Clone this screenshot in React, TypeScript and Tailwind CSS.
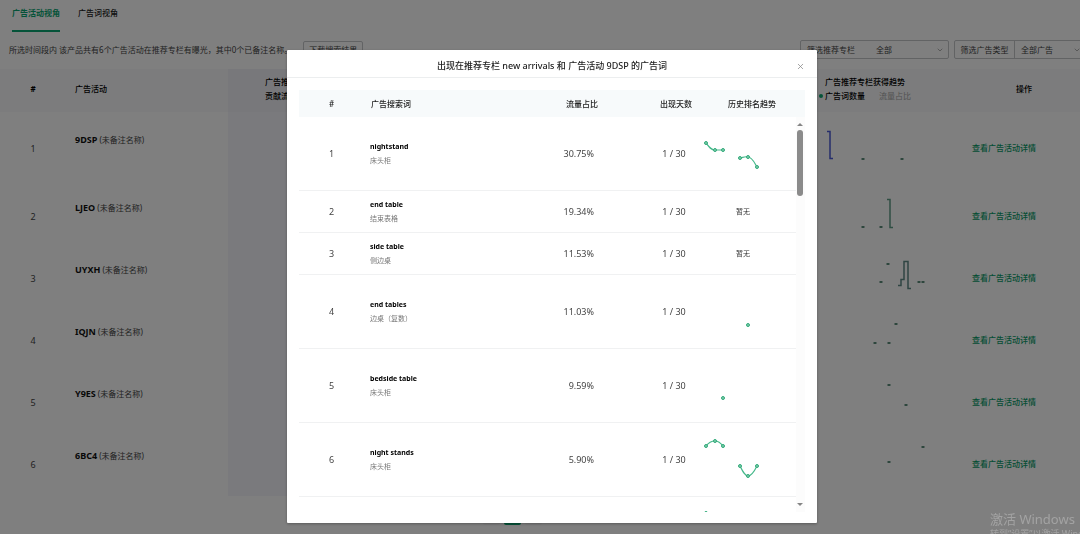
import React from "react";
import { ChevronDown, ChevronLeft, ChevronRight, X } from "lucide-react";

type Point = [number, number];

interface Campaign {
  code: string;
  line?: string;
  lineClass?: string;
  dots: Point[];
}

interface Keyword {
  word?: string;
  translation?: string;
  share?: string;
  days?: string;
  lines?: string[];
  points?: Point[];
}

const campaigns: Campaign[] = [
  { code: "9DSP", line: "M10 19.5h3v27h3", lineClass: "stroke-[#4a5ad8]", dots: [[46, 47], [85, 47]] },
  { code: "LJEO", line: "M70 13.5h3v28h3", lineClass: "stroke-[#5f9c86]", dots: [[46, 41], [64, 41]] },
  { code: "UYXH", line: "M81 37.5h3v-6h3v-18h4v27h3", lineClass: "stroke-[#5f8a86]", dots: [[71, 16], [64, 34], [102, 34], [106, 34]] },
  { code: "IQJN", dots: [[79, 14], [58, 33], [72, 33]] },
  { code: "Y9ES", dots: [[72, 13], [89, 33]] },
  { code: "6BC4", dots: [[106, 13], [72, 28]] },
];

const keywords: Keyword[] = [
  {
    word: "nightstand",
    translation: "床头柜",
    share: "30.75%",
    days: "1 / 30",
    lines: ["M2 25C5 29 7 32 11 32H19", "M36 40C39 39.5 41 38 44 39C48 39 50 44 53 49"],
    points: [[2, 25], [11, 32], [19, 32], [36, 40], [44, 39], [53, 49]],
  },
  { word: "end table", translation: "结束表格", share: "19.34%", days: "1 / 30" },
  { word: "side table", translation: "侧边桌", share: "11.53%", days: "1 / 30" },
  { word: "end tables", translation: "边桌（复数）", share: "11.03%", days: "1 / 30", points: [[44, 49]] },
  { word: "bedside table", translation: "床头柜", share: "9.59%", days: "1 / 30", points: [[19, 48]] },
  {
    word: "night stands",
    translation: "床头柜",
    share: "5.90%",
    days: "1 / 30",
    lines: ["M2 22C5 18 8 17 11 17C14 17 16 18 19 22", "M36 42C39 48 41 52 44 52C47 52 50 48 53 42"],
    points: [[2, 22], [11, 17], [19, 22], [36, 42], [44, 52], [53, 42]],
  },
  { points: [[2, 15]] },
];

function Tabs() {
  return (
    <nav className="flex h-8 gap-[18px] px-3 text-[8px]">
      <button className="border-b-2 border-[#0aa672] pb-1 font-bold text-[#0aa672]">广告活动视角</button>
      <button className="border-b-2 border-transparent pb-1 font-medium text-[#222]">广告词视角</button>
    </nav>
  );
}

function Filter({ id, label, value, divided }: { id: string; label: string; value: string; divided?: boolean }) {
  return (
    <div className="flex h-[19px] items-center rounded-[2px] border border-[#c4c6c9]">
      <label
        htmlFor={id}
        className={"flex h-full w-[60px] items-center justify-center " + (divided ? "border-r border-[#c4c6c9]" : "")}
      >
        {label}
      </label>
      <div className={"relative flex items-center " + (divided ? "w-[70px]" : "w-[87px]")}>
        <select
          id={id}
          className={"w-full appearance-none bg-transparent text-[8px] text-[#444] " + (divided ? "pl-1.5" : "pl-[15px]")}
        >
          <option>{value}</option>
        </select>
        <ChevronDown className="pointer-events-none absolute right-1 size-2 text-[#888]" strokeWidth={2} />
      </div>
    </div>
  );
}

function Toolbar() {
  return (
    <div className="mb-2.5 flex h-[27px] items-end justify-between text-[8px] text-[#444]">
      <div className="flex items-center gap-[11px] pl-[9px]">
        <p className="whitespace-nowrap">所选时间段内 该产品共有6个广告活动在推荐专栏有曝光，其中0个已备注名称。</p>
        <button className="h-[18px] rounded-[2px] border border-[#c4c6c9] px-[5px]">下载搜索结果</button>
      </div>
      <div className="-mr-1.5 flex gap-[5px]">
        <Filter id="column-filter" label="筛选推荐专栏" value="全部" />
        <Filter id="type-filter" label="筛选广告类型" value="全部广告" divided />
      </div>
    </div>
  );
}

function CampaignTable() {
  return (
    <table className="w-full table-fixed border-separate border-spacing-0 text-left text-[8px]">
      <colgroup>
        <col className="w-[66px]" />
        <col className="w-[162px]" />
        <col className="w-[132px]" />
        <col />
        <col className="w-[151px]" />
        <col className="w-[112px]" />
      </colgroup>
      <thead className="bg-[#f8f9fa] leading-[14px] text-black">
        <tr className="h-[43px] *:pb-[3px]">
          <th className="text-center">#</th>
          <th className="pl-[9px] font-medium">广告活动</th>
          <th className="bg-[#f1f1f6] pl-[37px] font-medium">
            广告推荐专栏
            <br />
            贡献流量占比
          </th>
          <th />
          <th className="pl-0.5 font-medium">
            <div className="pl-1.5">广告推荐专栏获得趋势</div>
            <div className="flex items-center gap-0.5">
              <span className="size-1 rounded-full bg-[#0aa672]" />
              广告词数量
              <span className="pl-3 font-normal text-[#a5a5a5]">流量占比</span>
            </div>
          </th>
          <th className="text-center font-medium">操作</th>
        </tr>
      </thead>
      <tbody>
        {campaigns.map((c, i) => (
          <tr key={c.code} className={i === 0 ? "h-[74px]" : "h-[62px]"}>
            <td className="text-center text-[9px] text-[#444]">{i + 1}</td>
            <td className="pb-[18px] pl-[9px] text-[#444]">
              <span className="text-[9px] font-bold text-[#111]">{c.code}</span> (未备注名称)
            </td>
            <td className="bg-[#f5f5fa]" />
            <td />
            <td className="align-top">
              <svg className="block h-[60px] w-[150px]" viewBox="0 0 150 60" aria-hidden="true">
                {c.line && <path d={c.line} fill="none" className={c.lineClass} strokeWidth="1.5" />}
                {c.dots.map(([x, y]) => (
                  <ellipse key={`${x}-${y}`} cx={x} cy={y} rx="1.8" ry="1" className="fill-[#4f8370]" />
                ))}
              </svg>
            </td>
            <td className="pb-0.5 pl-1">
              <a href="#details" className="font-medium text-[#0a9c69]">查看广告活动详情</a>
            </td>
          </tr>
        ))}
      </tbody>
    </table>
  );
}

function Pagination() {
  return (
    <div className="flex justify-center gap-1 pt-3 pr-14">
      <button aria-label="上一页" className="flex size-[17px] items-center justify-center rounded-[2px] bg-[#f7f7f8]">
        <ChevronLeft className="size-2" />
      </button>
      <button aria-label="当前页" className="size-[17px] rounded-[2px] bg-[#0aa672]" />
      <button aria-label="下一页" className="flex size-[17px] items-center justify-center rounded-[2px] bg-[#f7f7f8]">
        <ChevronRight className="size-2" />
      </button>
    </div>
  );
}

function RankTrend({ lines = [], points = [] }: { lines?: string[]; points?: Point[] }) {
  return (
    <svg className="block h-[72px] w-[92px]" viewBox="0 0 92 72" aria-hidden="true">
      {lines.map((d) => (
        <path key={d} d={d} fill="none" stroke="#45b88a" strokeWidth="1.2" />
      ))}
      {points.map(([x, y]) => (
        <circle key={`${x}-${y}`} cx={x} cy={y} r="1.5" fill="#7fcbac" stroke="#31ab7a" strokeWidth="1" />
      ))}
    </svg>
  );
}

function KeywordTable() {
  return (
    <table className="w-full table-fixed border-separate border-spacing-0 text-left">
      <colgroup>
        <col className="w-[65px]" />
        <col />
        <col className="w-[91px]" />
        <col className="w-[60px]" />
        <col className="w-[92px]" />
      </colgroup>
      <thead className="bg-[#f7fafb] text-[8px] text-[#222]">
        <tr className="h-[27px]">
          <th className="text-center font-medium">#</th>
          <th className="pl-[7px] font-medium">广告搜索词</th>
          <th className="pl-[13px] font-medium">流量占比</th>
          <th className="pl-1 text-center font-medium">出现天数</th>
          <th className="pl-1 text-center font-medium">历史排名趋势</th>
        </tr>
      </thead>
      <tbody className="text-[9px] text-[#444]">
        {keywords.map((k, i) => (
          <tr key={i} className={k.points ? "h-[74px] *:border-b *:border-[#f0f1f2]" : "h-[42px] *:border-b *:border-[#f0f1f2]"}>
            <td className="text-center">{k.word && i + 1}</td>
            <td className="pl-1.5">
              <div className="text-[7px] leading-[14px] font-bold text-black">{k.word}</div>
              <div className="text-[7px] leading-[13px] text-[#777]">{k.translation}</div>
            </td>
            <td className="pr-[50px] text-right">{k.share}</td>
            <td className="text-center">{k.days}</td>
            <td>
              {k.points ? (
                <RankTrend lines={k.lines} points={k.points} />
              ) : (
                <span className="pl-8 text-[7px] text-[#333]">暂无</span>
              )}
            </td>
          </tr>
        ))}
      </tbody>
    </table>
  );
}

function ScrollRail() {
  return (
    <div className="flex w-[9px] shrink-0 flex-col" aria-hidden="true">
      <div className="h-[27px] bg-[#f7fafb]" />
      <div className="flex flex-1 flex-col items-center bg-[#fcfcfc] py-1.5 pr-px">
        <svg className="h-[3px] w-1.5" viewBox="0 0 6 3">
          <path d="M0 3L3 0L6 3Z" fill="#858585" />
        </svg>
        <div className="mt-1 h-[66px] w-1.5 rounded-full bg-[#8b8b8b]" />
        <svg className="mt-auto h-[3px] w-1.5" viewBox="0 0 6 3">
          <path d="M0 0L3 3L6 0Z" fill="#858585" />
        </svg>
      </div>
    </div>
  );
}

function KeywordDialog() {
  return (
    <div className="fixed inset-0 flex justify-center bg-black/50 pt-[50px] pb-[11px] pl-6">
      <section
        role="dialog"
        aria-labelledby="dialog-title"
        className="flex w-[530px] max-w-full flex-col rounded-[1px] bg-white shadow-[0_1px_3px_rgba(0,0,0,0.3)]"
      >
        <header className="relative flex h-7 shrink-0 items-center justify-center border-b border-[#eceeef] pt-1">
          <h2 id="dialog-title" className="text-[9px] font-medium text-[#222]">
            出现在推荐专栏 new arrivals 和 广告活动 9DSP 的广告词
          </h2>
          <button aria-label="关闭" className="absolute right-3 bottom-1.5">
            <X className="size-[9px] text-[#888]" strokeWidth={2} />
          </button>
        </header>
        <div className="mx-3 mt-3 mb-[11px] flex min-h-0 flex-1">
          <div className="min-w-0 flex-1 overflow-hidden">
            <KeywordTable />
          </div>
          <ScrollRail />
        </div>
      </section>
    </div>
  );
}

export default function App() {
  return (
    <div className="h-screen overflow-hidden bg-white font-['Noto_Sans','Noto_Sans_CJK_SC',sans-serif] leading-3" lang="zh-CN">
      <Tabs />
      <Toolbar />
      <CampaignTable />
      <Pagination />
      <KeywordDialog />
      <aside className="pointer-events-none fixed top-[510px] left-[calc(100%-90px)] whitespace-nowrap text-[#a3a3a3]">
        <p className="text-[13px] leading-[18px]">激活 Windows</p>
        <p className="text-[9px] leading-3">转到“设置”以激活 Windows。</p>
      </aside>
    </div>
  );
}
